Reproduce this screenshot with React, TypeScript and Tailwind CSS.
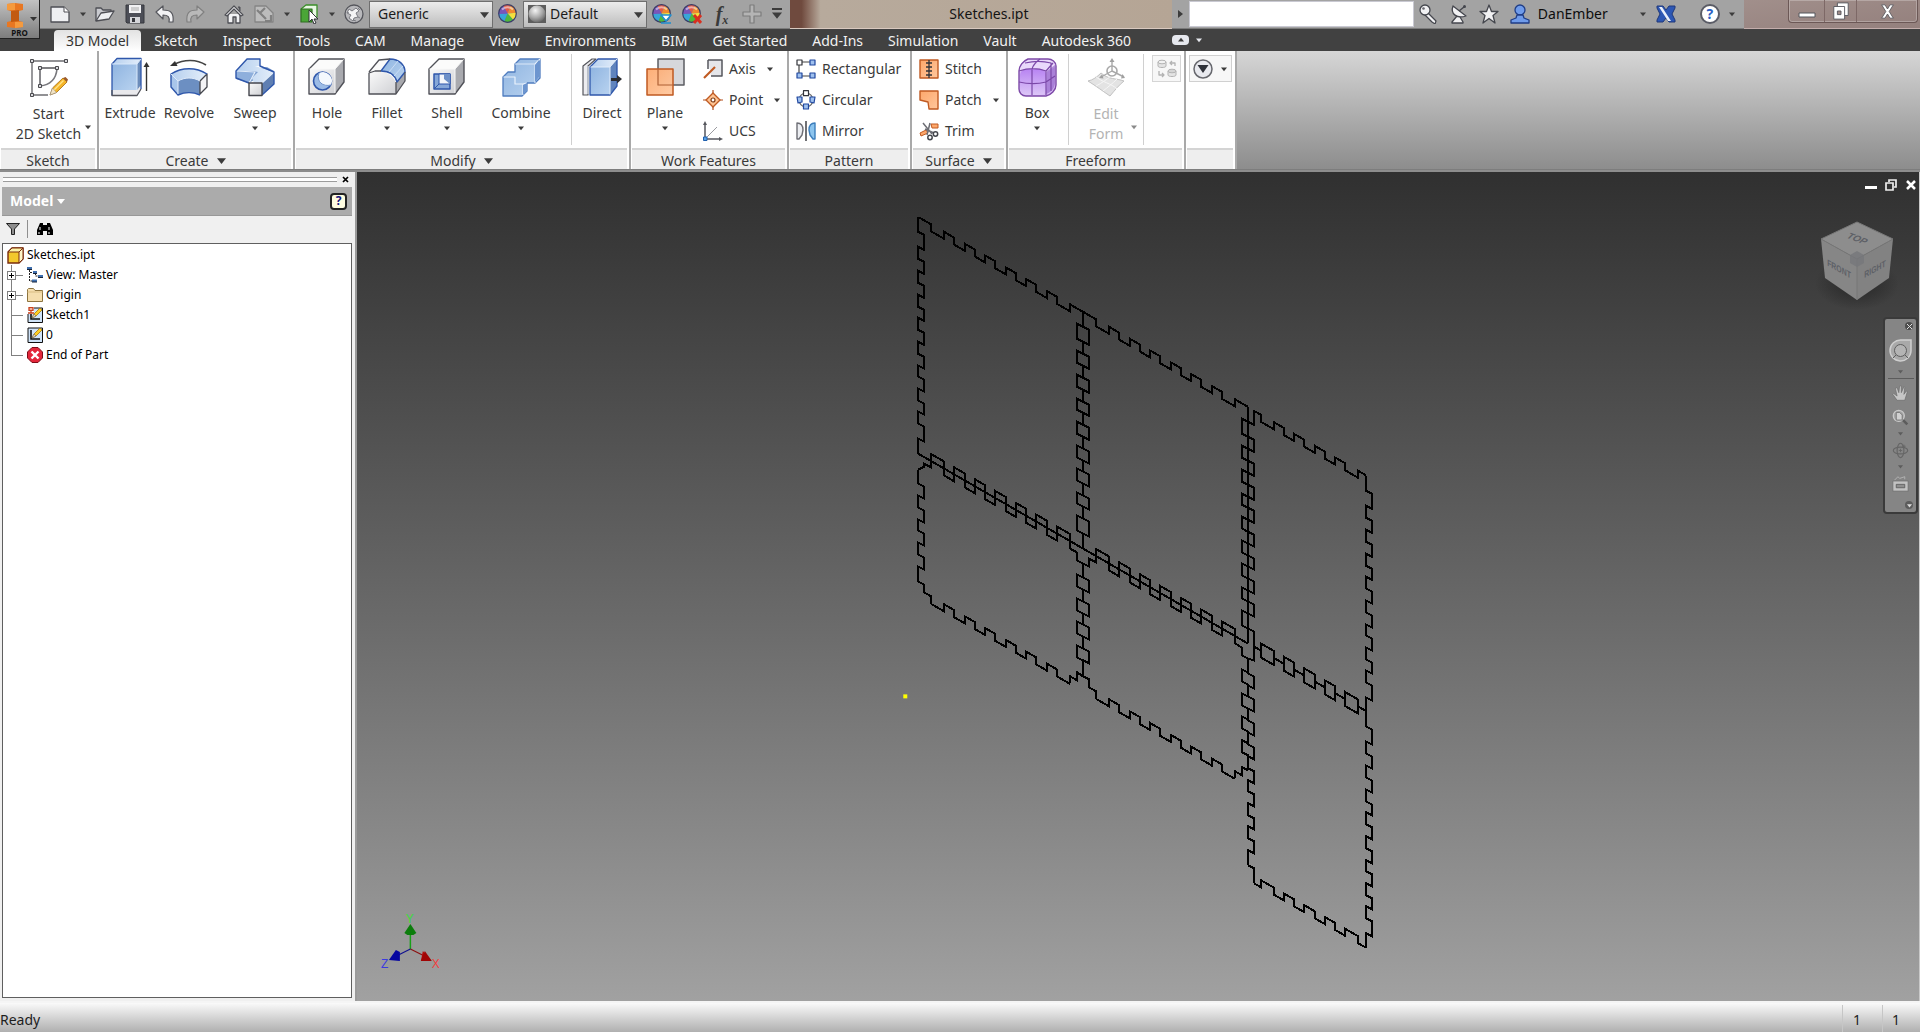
import type { ReactNode } from 'react';

/* ---------- small shared bits ---------- */

function Caret({ className = 'text-[#3c3c3c]', size = 6 }: { className?: string; size?: number }) {
  return (
    <svg width={size} height={size} viewBox="0 0 8 8" className={className} aria-hidden="true">
      <path d="M0 2h8L4 7z" fill="currentColor" />
    </svg>
  );
}

function Gradients() {
  return (
    <svg width="0" height="0" className="absolute" aria-hidden="true">
      <defs>
        <linearGradient id="blueFace" x1="0" y1="0" x2="1" y2="1">
          <stop offset="0" stopColor="#8fb4e0" />
          <stop offset="1" stopColor="#b9d3f0" />
        </linearGradient>
        <linearGradient id="blueTop" x1="0" y1="0" x2="1" y2="0">
          <stop offset="0" stopColor="#b5cfee" />
          <stop offset="1" stopColor="#e4eefa" />
        </linearGradient>
        <linearGradient id="greyFace" x1="0" y1="0" x2="1" y2="1">
          <stop offset="0" stopColor="#fafafa" />
          <stop offset="1" stopColor="#cfd0d4" />
        </linearGradient>
        <linearGradient id="orangeFace" x1="0" y1="0" x2="1" y2="1">
          <stop offset="0" stopColor="#fda76b" />
          <stop offset="1" stopColor="#ffc79d" />
        </linearGradient>
        <linearGradient id="purpleFace" x1="0" y1="0" x2="0" y2="1">
          <stop offset="0" stopColor="#b884f2" />
          <stop offset="1" stopColor="#dcc6f7" />
        </linearGradient>
        <radialGradient id="ball" cx="0.4" cy="0.3" r="0.7">
          <stop offset="0" stopColor="#f4f4f4" />
          <stop offset="0.6" stopColor="#a9a9a9" />
          <stop offset="1" stopColor="#6b6b6b" />
        </radialGradient>
      </defs>
    </svg>
  );
}

function Big({ children }: { children: ReactNode }) {
  return <svg width="40" height="40" viewBox="0 0 40 40" fill="none" strokeLinejoin="round" aria-hidden="true">{children}</svg>;
}

function Small({ children }: { children: ReactNode }) {
  return <svg width="20" height="20" viewBox="0 0 20 20" fill="none" strokeLinejoin="round" className="shrink-0" aria-hidden="true">{children}</svg>;
}

/* ---------- ribbon icons, large ---------- */

const SketchIcon = () => (
  <Big>
    <path d="M3 4H37M3 4V38H19" stroke="#6e6e72" strokeWidth="1.4" />
    <path d="M11 11H28M11 11V29" stroke="#55555a" strokeWidth="1.4" />
    <path d="M28 12C27 22 21 28 11 29" stroke="#77777c" strokeWidth="1.6" />
    {[[3, 4], [37, 4], [3, 38], [11, 11], [28, 11], [11, 29]].map(([x, y]) => (
      <rect key={`${x}-${y}`} x={x - 1.5} y={y - 1.5} width="3" height="3" fill="#d9d9dc" stroke="#4a4a4f" />
    ))}
    <path d="M21 38l2.500-7L34 21l4 4-10.500 10.500z" fill="#f5b527" stroke="#a36a10" strokeWidth="0.800" />
    <path d="M25 33l9.500-9.500" stroke="#ffe38a" strokeWidth="1.500" />
    <path d="M34 21l4 4 1-2.500-2.500-2.500z" fill="#9c5a2c" />
    <path d="M21 38l2.500-7 4 4.500z" fill="#f2e3c4" stroke="#888" strokeWidth="0.500" />
  </Big>
);

const ExtrudeIcon = () => (
  <Big>
    <path d="M2 7l5-5h24l-4 5z" fill="url(#blueTop)" />
    <path d="M27 7l4-5v30l-4 7z" fill="#6b8cba" />
    <path d="M2 7h25v26H2z" fill="url(#blueFace)" />
    <path d="M2 33h25l4-5v4l-4 7H2z" fill="#e9e9ec" />
    <path d="M2 38.500V7l5-5.500h24V32" stroke="#2f57ab" strokeWidth="1.300" />
    <path d="M2 7h25v26M27 7l4-5" stroke="#d9e8fa" />
    <path d="M2 33v5.500h25l4-6.500" stroke="#55565c" strokeWidth="1.300" />
    <path d="M36.500 34V8" stroke="#333" strokeWidth="1.400" />
    <path d="M33.500 10l3-5 3 5z" fill="#333" />
  </Big>
);

const RevolveIcon = () => (
  <Big>
    <path d="M2 17C13 10 27 10 38 17l-7 7c-7-4-15-4-22 0z" fill="url(#blueTop)" />
    <path d="M9 24c7-4 15-4 22 0v14c-7-3-15-3-22 0z" fill="#6c8fc2" />
    <path d="M2 17l7 7v14l-7-8z" fill="#a9c6ea" />
    <path d="M31 24l7-7v13l-7 7z" fill="#f3f3f5" stroke="#44464d" strokeWidth="1.300" />
    <path d="M31 38c-7-3-15-3-22 0l-7-8V17C13 10 27 10 38 17" stroke="#2f57ab" strokeWidth="1.400" />
    <path d="M2 17l7 7c7-4 15-4 22 0M9 24v13" stroke="#dfeafa" />
    <path d="M5 7.500C15 2 28 2 37 8" stroke="#444" strokeWidth="1.600" />
    <path d="M1 9l5-5 2.500 5z" fill="#333" />
  </Big>
);

const SweepIcon = () => (
  <Big>
    <path d="M1 14v8l13 4 5-3 8 3 12-12-7-4z" fill="#7d9fd0" />
    <path d="M1 14L12 2h13v7h-5l19 6-12 11h-8l-2-5 6-6-5-1z" fill="url(#blueTop)" />
    <path d="M27 26l12-11v12L27 38z" fill="#5f7fb2" />
    <path d="M1 14l19 1-6 8v3L1 21z" fill="#8eafdc" />
    <path d="M1 14l19 1-6 11h13l12-11" stroke="#e2edfa" strokeWidth="1.200" />
    <path d="M14 26L1 21v-7L12 2h13v7l14 6v12L27 38" stroke="#2f57ab" strokeWidth="1.400" />
    <path d="M14 26h13v12.500H14z" fill="url(#greyFace)" stroke="#44464d" strokeWidth="1.400" />
  </Big>
);

const GreyCube = ({ children }: { children?: ReactNode }) => (
  <Big>
    <path d="M2 12L12 2h25l-9 10z" fill="#fbfbfb" />
    <path d="M28 12l9-10v23L28 37z" fill="#a9aaaf" />
    <path d="M2 12h26v25H2z" fill="url(#greyFace)" />
    <path d="M2 12L12 2h25v23L28 37H2z" stroke="#505158" strokeWidth="1.400" />
    <path d="M2.500 12H28v24M28 12l8.500-9.500" stroke="#f8f8f8" />
    {children}
  </Big>
);

const HoleIcon = () => (
  <GreyCube>
    <circle cx="15.500" cy="24" r="9" fill="#9bbbe6" stroke="#2f57ab" strokeWidth="1.600" />
    <path d="M12 16a9 9 0 0 0 12 12 9 9 0 0 0-12-12z" fill="#f4f8fd" />
    <path d="M12 16c-3 9 4 14 12 12" stroke="#6e92cc" />
  </GreyCube>
);

const FilletIcon = () => (
  <Big>
    <path d="M2 15L12 3h10L14 15z" fill="#fafafa" />
    <path d="M2 15h12c8 0 14 6 15 12v10H2z" fill="url(#greyFace)" />
    <path d="M29 24l9-9v9l-9 13z" fill="#a7a8ad" />
    <path d="M14 14L23 2c9 0 15 6 15 13l-8 10c-2-7-8-11-16-11z" fill="url(#blueFace)" stroke="#2f57ab" strokeWidth="1.400" />
    <path d="M22 15l9-11M27 19l9-10" stroke="#c9ddf5" />
    <path d="M14 14H8l-6 2v21h27l9-13v-9M29 25v12M2 15L12 3l11-1" stroke="#505158" strokeWidth="1.300" />
  </Big>
);

const ShellIcon = () => (
  <GreyCube>
    <path d="M7 17h16v15H7z" fill="#86a7d8" stroke="#2f57ab" strokeWidth="1.500" />
    <path d="M12 17h11v10H12z" fill="#f3f6fb" stroke="#2f57ab" />
    <path d="M17 17h6v10l-6-5z" fill="#6d90c8" />
    <path d="M7 32l5-5" stroke="#2f57ab" />
  </GreyCube>
);

const CombineIcon = () => (
  <Big>
    <path d="M2 20l5-5h7V7l5-5h20v19l-5 5h-8v8l-5 5H2z" fill="url(#blueFace)" stroke="#4f7cbf" strokeWidth="1.300" />
    <path d="M14 7h20v19" stroke="#dbe8f8" strokeWidth="1.200" />
    <path d="M2.500 20H14v7h8v11M34 7l5-5M22 27l4-1" stroke="#eaf2fc" strokeWidth="1.200" />
    <path d="M34 8l4-5v17l-4 5z" fill="#6c95cf" />
    <path d="M22 28l4-2v8l-4 4z" fill="#6c95cf" />
  </Big>
);

const DirectIcon = () => (
  <Big>
    <path d="M1 9L10 2h4L6 9v29H1z" fill="#ececef" stroke="#55565c" strokeWidth="1.200" />
    <path d="M8 10l8-8h19l-7 8z" fill="url(#blueTop)" />
    <path d="M28 10l7-8v27l-7 9z" fill="#6084bd" />
    <path d="M8 10h20v28H8z" fill="url(#blueFace)" />
    <path d="M8 10l8-8h19v27l-7 9H8z" stroke="#2f57ab" strokeWidth="1.300" />
    <path d="M8.500 10H28v27.500M28 10l7-8M6 9v28" stroke="#e2edfa" />
    <path d="M29 21h6v-3l5 4-5 4.500V24h-6z" fill="#2c2d31" />
  </Big>
);

const PlaneIcon = () => (
  <Big>
    <path d="M13 2h26v26H13z" fill="#d6d7db" stroke="#5c5d63" strokeWidth="1.500" />
    <path d="M2 12h26v26H2z" fill="url(#orangeFace)" stroke="#c05a22" strokeWidth="1.500" fillOpacity="0.920" />
    <path d="M13 12v16h15" stroke="#b5673a" strokeWidth="1.200" />
  </Big>
);

const BoxIcon = () => (
  <Big>
    <path d="M2 14c0-5 4-10 9-12h20c4 0 8 3 8 7v19c0 5-5 10-10 11H9c-4 0-7-3-7-7z" fill="#d7baf5" />
    <path d="M2 13c0-6 4-9 9-11h20c4 0 7 4 7 8l-8 5c-8-2-20-2-28 0z" fill="#e9d8fb" />
    <rect x="3" y="12" width="26" height="26" rx="6" fill="url(#purpleFace)" />
    <path d="M30 14l8-6v18c0 5-4 9-9 11z" fill="#8c5cc4" fillOpacity="0.600" />
    <path d="M2 14c9-3 19-3 27 0v24M2 25c9 2 19 2 27 0l9-6M15 38V12c1-4 4-7 8-10M8 6c9-2 18-2 26 0v28M29 14l7-8" stroke="#7b48a8" strokeWidth="1.200" />
    <path d="M2 14c0-5 4-10 9-12h20c4 0 8 3 8 7v19c0 5-5 10-10 11H9c-4 0-7-3-7-7z" stroke="#7d4aa8" strokeWidth="1.400" />
  </Big>
);

const EditFormIcon = () => (
  <Big>
    <path d="M2 24c5-1 9-4 13-8 8 7 15 5 23 8-5 4-9 9-14 15-6-4-14-10-22-15z" fill="#e3e3e3" stroke="#c2c2c2" />
    <path d="M9 19c8 7 16 7 22 13M10 29c6-3 11-7 15-10M17 34c5-4 9-7 14-12" stroke="#f6f6f6" />
    <circle cx="26" cy="14" r="5" stroke="#a9a9a9" strokeWidth="1.600" />
    <path d="M26 14V3M26 14l12 6M26 14l-11 6" stroke="#a9a9a9" strokeWidth="1.400" />
    <path d="M23.500 5L26 1l2.500 4zM35 21.500l4-.5-2.500-4zM13 21l4.500.500-1.500-4z" fill="#a0a0a0" />
  </Big>
);

/* ---------- ribbon icons, small ---------- */

const AxisIcon = () => (
  <Small>
    <path d="M5 1h14v16H8M5 1v9" fill="#e5e6ea" stroke="#56575d" strokeWidth="1.500" />
    <path d="M1 19L12 8" stroke="#c05a22" strokeWidth="2.200" />
  </Small>
);
const PointIcon = () => (
  <Small>
    <path d="M10 0v20M0 10h20" stroke="#b04f1e" strokeWidth="1.200" />
    <path d="M10 3l7 7-7 7-7-7z" fill="#ffc493" stroke="#c05a22" strokeWidth="1.400" />
    <circle cx="10" cy="10" r="2" fill="#fff" stroke="#7d3a16" strokeWidth="1.200" />
  </Small>
);
const UcsIcon = () => (
  <Small>
    <path d="M2 16V2M4 18h14" stroke="#56575d" strokeWidth="1.500" />
    <path d="M3 17L14 6" stroke="#9a9ba0" />
    <path d="M0 4l2-4 2 4zM16 16l4 2-4 2z" fill="#56575d" />
    <rect x="0.500" y="16" width="3.500" height="3.500" fill="#5aa4e8" stroke="#1f5fae" />
  </Small>
);
const RectangularIcon = () => (
  <Small>
    <path d="M6 3h8M3 6v8M6 17h8" stroke="#444" strokeWidth="1.200" />
    <rect x="1" y="1" width="5" height="5" fill="#fff" stroke="#33343a" strokeWidth="1.200" />
    <rect x="14" y="1" width="5" height="5" fill="#9fc0ee" stroke="#2148a0" strokeWidth="1.200" />
    <rect x="1" y="14" width="5" height="5" fill="#9fc0ee" stroke="#2148a0" strokeWidth="1.200" />
    <rect x="14" y="14" width="5" height="5" fill="#9fc0ee" stroke="#2148a0" strokeWidth="1.200" />
  </Small>
);
const CircularIcon = () => (
  <Small>
    <circle cx="10" cy="10" r="7" stroke="#666" strokeWidth="1.200" />
    <rect x="7.500" y="0.700" width="5" height="5" fill="#fff" stroke="#33343a" strokeWidth="1.200" />
    <rect x="7.500" y="14" width="5" height="5" fill="#9fc0ee" stroke="#2148a0" strokeWidth="1.200" />
    <path d="M1 7h5v5l-4 1zM19 7h-5v5l4 1z" fill="#9fc0ee" stroke="#2148a0" strokeWidth="1.200" />
  </Small>
);
const MirrorIcon = () => (
  <Small>
    <path d="M1 2c4 0 6 3 6 7l-1 5-3 4-2 0z" fill="#eceef2" stroke="#6d6e75" strokeWidth="1.400" />
    <path d="M19 2c-4 0-6 3-6 7l1 5 3 4 2 0z" fill="#8cc4ee" stroke="#3c7ebc" strokeWidth="1.400" />
    <path d="M10 0v20" stroke="#33343a" strokeWidth="1.400" />
  </Small>
);
const StitchIcon = () => (
  <Small>
    <path d="M1 1h18v18H1z" fill="url(#orangeFace)" stroke="#c05a22" strokeWidth="1.400" />
    <path d="M10 1v18M7 4h6M7 8h6M7 12h6M7 16h6" stroke="#33343a" strokeWidth="1.300" />
  </Small>
);
const PatchIcon = () => (
  <Small>
    <path d="M1 1h18v18h-9l-1-7-8-2z" fill="url(#orangeFace)" stroke="#c05a22" strokeWidth="1.400" />
  </Small>
);
const TrimIcon = () => (
  <Small>
    <path d="M12 3h7v4h-6zM1 12l6-3 2 3-7 3z" fill="#fda76b" stroke="#c05a22" />
    <path d="M4 2l9 11M11 2L8 14M6 8l9 4" stroke="#6d6e75" strokeWidth="1.500" />
    <circle cx="11" cy="16.500" r="2.200" stroke="#44464d" strokeWidth="1.500" />
    <circle cx="16.500" cy="13" r="2.200" stroke="#44464d" strokeWidth="1.500" />
  </Small>
);

/* ---------- title bar ---------- */

function QuickButton({ label, wide = true, children }: { label: string; wide?: boolean; children: ReactNode }) {
  return (
    <button aria-label={label} className={`flex h-full shrink-0 items-center justify-center ${wide ? 'w-[30px]' : 'w-[15px]'}`}>
      {children}
    </button>
  );
}

const ColorBall = ({ mark }: { mark?: 'down' | 'clear' }) => (
  <Small>
    <circle cx="9.500" cy="9.500" r="9" fill="#4a6fd0" />
    <path d="M9.500 9.500L5 1.700A9 9 0 0 1 13 1.200z" fill="#e05a4a" />
    <path d="M9.500 9.500L13 1.200a9 9 0 0 1 5.500 7.500z" fill="#f08a2c" />
    <path d="M9.500 9.500l9-.8a9 9 0 0 1-3.500 7z" fill="#f4e03c" />
    <path d="M9.500 9.500l5.500 6.200a9 9 0 0 1-9 2z" fill="#4fb83c" />
    <path d="M9.500 9.500L6 17.700A9 9 0 0 1 .6 10z" fill="#37a6d8" />
    <path d="M9.500 9.500L.6 10A9 9 0 0 1 5 1.700z" fill="#7a55b8" />
    <circle cx="9.500" cy="9.500" r="8.800" stroke="#3c3f66" strokeWidth="1.200" />
    <path d="M4 5.500C7 2.500 12 2.500 15 5.500" stroke="#fff" strokeOpacity="0.500" strokeWidth="2" />
    {mark === 'down' && <path d="M9 11h10l-5 6zM9 19h10" fill="#fff" stroke="#1f8fd0" strokeWidth="1.600" />}
    {mark === 'clear' && <path d="M12 11l7 8M19 11l-7 8" stroke="#d8301f" strokeWidth="3" />}
  </Small>
);

function Combo({ label, value, options, thumb }: { label: string; value: string; options: string[]; thumb?: boolean }) {
  return (
    <div className="relative flex h-[27px] w-[124px] shrink-0 items-center border border-[#6f6f6f] bg-linear-to-b from-[#ececec] to-[#bdbdbd]">
      {thumb && (
        <svg width="18" height="18" viewBox="0 0 18 18" className="ml-1 shrink-0" aria-hidden="true">
          <rect width="18" height="18" fill="#5d5d5d" />
          <circle cx="9" cy="9" r="8.500" fill="url(#ball)" />
        </svg>
      )}
      <select aria-label={label} defaultValue={value} className={`h-full min-w-0 flex-1 appearance-none bg-transparent text-sm text-[#1b1b1b] outline-none ${thumb ? 'pl-1' : 'pl-2'}`}>
        {options.map((o) => <option key={o}>{o}</option>)}
      </select>
      <span className="pointer-events-none absolute right-[3px]"><Caret size={9} /></span>
    </div>
  );
}

function QuickAccess() {
  return (
    <div className="flex w-[790px] shrink-0 items-center border-b border-[#7b7b7b] bg-[#a3a3a3] pl-[45px]">
      <QuickButton label="New">
        <Small><path d="M1 3h13l5 5v10H1z" fill="#eeeff2" stroke="#4e4f55" strokeWidth="1.300" /><path d="M14 3v5h5" fill="#fff" stroke="#4e4f55" /></Small>
      </QuickButton>
      <QuickButton label="New options" wide={false}><Caret /></QuickButton>
      <QuickButton label="Open">
        <Small><path d="M1 17V4h5l2 2h8v3" fill="#c9cacf" stroke="#4e4f55" strokeWidth="1.300" /><path d="M1 17L6 9l13-2-5 8z" fill="#eeeff2" stroke="#4e4f55" strokeWidth="1.300" /></Small>
      </QuickButton>
      <QuickButton label="Save">
        <Small><path d="M1 1h18v18H2l-1-1z" fill="#4c4e57" stroke="#37383e" /><path d="M4 1h12v8H4z" fill="#f1f1f3" /><path d="M5 13h10v6H5z" fill="#d5d6da" /><path d="M7 14h3v4H7z" fill="#37383e" /><path d="M6 4h8M6 6h8" stroke="#aaa" /></Small>
      </QuickButton>
      <QuickButton label="Undo">
        <Small><path d="M1 8l7-6v4c8 0 11 3 10 12h-4c1-5-1-7-6-7v4z" fill="#f2f2f4" stroke="#55565c" strokeWidth="1.200" /></Small>
      </QuickButton>
      <QuickButton label="Redo">
        <Small><path d="M19 8l-7-6v4C4 6 1 9 2 18h4c-1-5 1-7 6-7v4z" fill="#b9b9b9" stroke="#808080" strokeWidth="1.200" /></Small>
      </QuickButton>
      <span className="w-[9px] shrink-0" />
      <QuickButton label="Home view">
        <Small><path d="M4 10v9h5v-6h3v6h4v-9" fill="#f2f2f4" stroke="#4e4f55" strokeWidth="1.300" /><path d="M14 3h2v4" fill="#55565c" stroke="#4e4f55" /><path d="M1 11l9-9 9 9-2 1-7-7-7 7z" fill="#f7f7f8" stroke="#4e4f55" strokeWidth="1.200" /></Small>
      </QuickButton>
      <QuickButton label="Update">
        <Small><path d="M1 2h11l7 7v9H1z" fill="#bcbcbc" stroke="#858585" strokeWidth="1.300" /><path d="M3 6l9 9M11 4L6 9m5 8h6v-6" stroke="#808080" strokeWidth="2.200" /></Small>
      </QuickButton>
      <QuickButton label="Update options" wide={false}><Caret /></QuickButton>
      <QuickButton label="Selection filter">
        <Small><path d="M2 5l5-4h11v12l-4 4" fill="#e9f7e4" stroke="#3b8f2a" strokeWidth="1.300" /><path d="M2 5h11v13H2z" fill="#4aa637" stroke="#2e6f20" strokeWidth="1.200" /><path d="M10 6v12l3-3 2 5 2-1-2-4h4z" fill="#fff" stroke="#33343a" /></Small>
      </QuickButton>
      <QuickButton label="Filter options" wide={false}><Caret /></QuickButton>
      <QuickButton label="Material">
        <Small><circle cx="10" cy="10" r="9" fill="#b9b9bc" stroke="#55565c" strokeWidth="1.300" /><path d="M5 5l3 2 4-3 3 3-3 2 2 4-4 1-1 3-4-3 2-3-4-2zM14 13l2 1M9 16l3 1M3 8l2 1M14 4l2 2" stroke="#7b7c82" fill="#f4f4f5" /></Small>
      </QuickButton>
      <Combo label="Material" value="Generic" options={['Generic', 'Steel', 'Aluminum']} />
      <QuickButton label="Appearance"><ColorBall /></QuickButton>
      <Combo label="Appearance" value="Default" options={['Default', 'Smooth']} thumb />
      <QuickButton label="Adjust"><ColorBall mark="down" /></QuickButton>
      <QuickButton label="Clear overrides"><ColorBall mark="clear" /></QuickButton>
      <QuickButton label="Parameters">
        <span className="font-['Liberation_Serif'] text-xl leading-none font-bold text-[#3a3a3a] italic">f<sub className="text-xs">x</sub></span>
      </QuickButton>
      <QuickButton label="Measure">
        <Small><path d="M8 1h4v7h7v4h-7v7H8v-7H1V8h7z" fill="#b4b4b4" stroke="#7c7c7c" strokeWidth="1.200" /></Small>
      </QuickButton>
      <button aria-label="Customize toolbar" className="flex w-[20px] flex-col items-center">
        <span className="h-[2px] w-[10px] bg-[#3c3c3c]" />
        <Caret size={10} />
      </button>
    </div>
  );
}

function InfoCenter() {
  return (
    <div className="flex w-[572px] shrink-0 items-center border-b border-[#7b7b7b] bg-[#a3a3a3]">
      <button aria-label="Collapse search" className="flex w-[17px] justify-center">
        <span className="-rotate-90"><Caret size={8} /></span>
      </button>
      <input aria-label="Search" className="h-[26px] w-[225px] border border-[#c9c9d2] bg-white px-1 text-sm outline-none" />
      <QuickButton label="Search">
        <Small><path d="M9 9l8 8-1 3-3-2-8-8z" fill="#f1f1f3" stroke="#44464d" strokeWidth="1.200" /><circle cx="6" cy="6" r="5" fill="#f1f1f3" stroke="#44464d" strokeWidth="1.300" /><circle cx="4.500" cy="4.500" r="1.300" fill="#66676d" /></Small>
      </QuickButton>
      <QuickButton label="Communication center">
        <Small><path d="M8 12l-5 6v1h11v-1l-3-5" fill="#f1f1f3" stroke="#44464d" strokeWidth="1.300" /><path d="M4 2c-3 8 4 13 13 10z" fill="#f1f1f3" stroke="#44464d" strokeWidth="1.300" /><path d="M10 7l5-4" stroke="#44464d" strokeWidth="1.500" /><circle cx="15.500" cy="2.500" r="1.500" fill="#44464d" /></Small>
      </QuickButton>
      <QuickButton label="Favorites">
        <Small><path d="M10 1l2.500 6.500H19l-5 4 2 7.500-6-4.500L4 19l2-7.500-5-4h6.500z" fill="#f1f1f3" stroke="#44464d" strokeWidth="1.300" /></Small>
      </QuickButton>
      <button className="flex w-[132px] items-center pl-[6px] text-sm text-[#0d0d0d]">
        <Small><circle cx="10" cy="6" r="5" fill="#6f9bea" stroke="#1f3d86" strokeWidth="1.300" /><path d="M7 11h6l1 3 5 2v3H1v-3l5-2z" fill="#6f9bea" stroke="#1f3d86" strokeWidth="1.300" /></Small>
        <span className="ml-2">DanEmber</span>
      </button>
      <QuickButton label="Account options" wide={false}><Caret /></QuickButton>
      <QuickButton label="Exchange apps">
        <Small><path d="M1 2h6l3 4 3-4h6v2l-3 6 3 6v2h-6l-3-4-3 4H1v-2l3-6-3-6z" fill="#2d57b4" stroke="#20397a" /><path d="M3 3h3l9 14h-3z" fill="#e9effb" /></Small>
      </QuickButton>
      <span className="w-[14px]" />
      <QuickButton label="Help">
        <span className="flex size-5 items-center justify-center rounded-full border-2 border-[#5a5c66] bg-white text-sm leading-none font-bold text-[#2a5fc4]">?</span>
      </QuickButton>
      <QuickButton label="Help options" wide={false}><Caret /></QuickButton>
    </div>
  );
}

function WindowButtons() {
  return (
    <div className="flex min-w-0 flex-[10] justify-end border-b border-[#c3adab] bg-linear-to-br from-[#a18f8b] to-[#94807d] pr-[2px]">
      <div className="flex h-[23px] rounded-b border border-t-0 border-[#6c5856] shadow-[inset_0_0_0_1px_rgba(255,255,255,0.25)]">
        <button aria-label="Minimize" className="flex w-9 items-center justify-center border-r border-[#7d6866]">
          <svg width="18" height="18" viewBox="0 0 18 18"><path d="M1 11h16v4H1z" fill="#fff" stroke="#55565c" /></svg>
        </button>
        <button aria-label="Restore" className="flex w-8 items-center justify-center border-r border-[#7d6866]">
          <svg width="18" height="18" viewBox="0 0 18 20"><path d="M5 1h12v14H5z" fill="#fff" stroke="#55565c" /><path d="M1 5h12v14H1z" fill="#fff" stroke="#55565c" /><path d="M5 10h4v4H5z" fill="#a08c89" stroke="#55565c" /></svg>
        </button>
        <button aria-label="Close" className="flex w-[60px] items-center justify-center">
          <svg width="15" height="15" viewBox="0 0 16 18"><path d="M1 1h4l3 5 3-5h4l-5 8 5 8h-4l-3-5-3 5H1l5-8z" fill="#fff" stroke="#55565c" /></svg>
        </button>
      </div>
    </div>
  );
}

/* ---------- menu tabs ---------- */

const tabs = ['3D Model', 'Sketch', 'Inspect', 'Tools', 'CAM', 'Manage', 'View', 'Environments', 'BIM', 'Get Started', 'Add-Ins', 'Simulation', 'Vault', 'Autodesk 360'];

function TabBar() {
  return (
    <nav className="flex h-[22px] items-end gap-px bg-[#414141] pl-[54px] text-sm leading-[21px] text-[#f2f2f2]">
      {tabs.map((t, i) => (
        <button key={t} className={i === 0 ? 'h-[21px] rounded-t-sm bg-linear-to-b from-[#e2e2e2] to-white px-3 text-[#333]' : 'h-[21px] px-3'}>
          {t}
        </button>
      ))}
      <button aria-label="Minimize ribbon" className="ml-[28px] flex h-[10px] w-[17px] items-center justify-center self-center rounded-sm bg-[#e6e8ee]">
        <span className="rotate-180"><Caret size={6} /></span>
      </button>
      <button aria-label="Ribbon options" className="ml-[6px] self-center"><Caret size={6} className="text-[#e6e8ee]" /></button>
    </nav>
  );
}

/* ---------- ribbon ---------- */

function Panel({ title, width, more, children }: { title: string; width: string; more?: boolean; children?: ReactNode }) {
  return (
    <section className={`flex shrink-0 flex-col border-r-2 border-[#a9a9a9] bg-white ${width}`}>
      <div className="flex h-[97px]">{children}</div>
      <div className="mr-[2px] ml-px flex flex-1 items-center justify-center gap-2 border-t-2 border-[#d4d4d4] bg-[#eeeeee] pt-[2px] text-sm leading-4">
        {title}
        {more && <Caret size={9} />}
      </div>
    </section>
  );
}

type BigButtonProps = { icon: ReactNode; label: string; width: string; menu?: boolean };

function BigButton({ icon, label, width, menu }: BigButtonProps) {
  return (
    <button className={`flex shrink-0 flex-col items-center pt-[6px] text-sm leading-5 ${width}`}>
      {icon}
      <span className="mt-[6px]">{label}</span>
      {menu && <span className="mt-[2px]"><Caret size={6} /></span>}
    </button>
  );
}

function TwoLineButton({ icon, lines, width, disabled }: { icon: ReactNode; lines: [string, string]; width: string; disabled?: boolean }) {
  return (
    <button disabled={disabled} className={`relative flex shrink-0 flex-col items-center pt-[6px] text-sm leading-5 ${width} ${disabled ? 'text-[#b3b3b3]' : ''}`}>
      {icon}
      <span className="mt-[7px]">{lines[0]}</span>
      <span>{lines[1]}</span>
      <span className="absolute right-[6px] bottom-[18px]"><Caret size={6} className={disabled ? 'text-[#8a8a8a]' : 'text-[#3c3c3c]'} /></span>
    </button>
  );
}

type Row = { icon: ReactNode; label: string; menu?: boolean };

function Rows({ rows }: { rows: Row[] }) {
  return (
    <div className="flex flex-col pt-[2px] pl-[7px]">
      {rows.map((r) => (
        <button key={r.label} className="flex h-[31px] items-center gap-[6px] text-sm">
          {r.icon}
          <span>{r.label}</span>
          {r.menu && <span className="ml-[5px]"><Caret size={6} /></span>}
        </button>
      ))}
    </div>
  );
}

const Rule = () => <span className="my-[3px] w-px shrink-0 bg-[#d0d0d0]" />;

function Ribbon() {
  return (
    <div className="flex h-[119px] border-b border-[#7d7d7d] bg-linear-to-b from-[#d6d6d6] to-[#8d8d8d] text-[#3a3a3a]">
      <Panel title="Sketch" width="w-[99px]">
        <TwoLineButton icon={<SketchIcon />} lines={['Start', '2D Sketch']} width="w-[97px]" />
      </Panel>
      <Panel title="Create" width="w-[196px]" more>
        <span className="w-[2px]" />
        <BigButton icon={<ExtrudeIcon />} label="Extrude" width="w-[58px]" />
        <BigButton icon={<RevolveIcon />} label="Revolve" width="w-[60px]" />
        <BigButton icon={<SweepIcon />} label="Sweep" width="w-[72px]" menu />
      </Panel>
      <Panel title="Modify" width="w-[336px]" more>
        <span className="w-[2px] shrink-0" />
        <BigButton icon={<HoleIcon />} label="Hole" width="w-[60px]" menu />
        <BigButton icon={<FilletIcon />} label="Fillet" width="w-[60px]" menu />
        <BigButton icon={<ShellIcon />} label="Shell" width="w-[60px]" menu />
        <BigButton icon={<CombineIcon />} label="Combine" width="w-[88px]" menu />
        <span className="w-[6px] shrink-0" />
        <Rule />
        <BigButton icon={<DirectIcon />} label="Direct" width="w-[60px]" />
      </Panel>
      <Panel title="Work Features" width="w-[158px]">
        <span className="w-[3px]" />
        <BigButton icon={<PlaneIcon />} label="Plane" width="w-[62px]" menu />
        <Rows rows={[
          { icon: <AxisIcon />, label: 'Axis', menu: true },
          { icon: <PointIcon />, label: 'Point', menu: true },
          { icon: <UcsIcon />, label: 'UCS' },
        ]} />
      </Panel>
      <Panel title="Pattern" width="w-[123px]">
        <Rows rows={[
          { icon: <RectangularIcon />, label: 'Rectangular' },
          { icon: <CircularIcon />, label: 'Circular' },
          { icon: <MirrorIcon />, label: 'Mirror' },
        ]} />
      </Panel>
      <Panel title="Surface" width="w-[96px]" more>
        <Rows rows={[
          { icon: <StitchIcon />, label: 'Stitch' },
          { icon: <PatchIcon />, label: 'Patch', menu: true },
          { icon: <TrimIcon />, label: 'Trim' },
        ]} />
      </Panel>
      <Panel title="Freeform" width="w-[178px]">
        <BigButton icon={<BoxIcon />} label="Box" width="w-[58px]" menu />
        <span className="w-[2px]" />
        <Rule />
        <TwoLineButton icon={<EditFormIcon />} lines={['Edit', 'Form']} width="w-[74px]" disabled />
        <Rule />
        <button aria-label="Convert" disabled className="mt-1 ml-2 flex h-[27px] w-[29px] items-center justify-center border border-[#d5d5d5] bg-[#f7f7f7]">
          <Small>
            <path d="M1 3v4c0 2 8 2 8 0V3M11 12v4c0 2 8 2 8 0v-4" fill="#e4e4e4" stroke="#b3b3b3" />
            <ellipse cx="5" cy="3" rx="4" ry="1.800" fill="#f2f2f2" stroke="#b3b3b3" />
            <ellipse cx="15" cy="12" rx="4" ry="1.800" fill="#d5d5d5" stroke="#b3b3b3" />
            <path d="M18 7V4h-5l2-2m-2 2l2 2M2 12v4h5l-2-2m2 2l-2 2" stroke="#b3b3b3" strokeWidth="1.300" />
          </Small>
        </button>
      </Panel>
      <Panel title="" width="w-[51px]">
        <button aria-label="Select other" className="mt-1 ml-[3px] flex h-[27px] w-[43px] items-center gap-2 border border-[#d0d0d0] bg-[#f7f7f7] pl-[3px]">
          <Small>
            <circle cx="10" cy="10" r="9" fill="#e8e9ee" stroke="#66676d" strokeWidth="1.500" />
            <path d="M4.500 6h11L10 14z" fill="#2d3038" />
          </Small>
          <Caret size={6} />
        </button>
      </Panel>
    </div>
  );
}

/* ---------- model browser ---------- */

const SketchNode = ({ shared }: { shared?: boolean }) => (
  <svg width="16" height="16" viewBox="0 0 16 16" fill="none" aria-hidden="true">
    <path d="M1 1h14.500v14.500H1z" fill="#cfe3f8" stroke="#111" />
    <path d="M4 3v9h9" stroke="#111" strokeWidth="1.600" />
    <path d="M5 11l2-4 6-6 2 2-6 6z" fill="#ffcf24" stroke="#9b6a00" strokeWidth="0.700" />
    <path d="M5 11l2-4 2 2z" fill="#f0dcc0" stroke="#555" strokeWidth="0.500" />
    {shared && <path d="M0 0h7v7H0z" fill="#fff" />}
    {shared && <path d="M2 .7h4v2.600H2zM1 6h6M4 3v3" fill="#ffd6c4" stroke="#c8401c" strokeWidth="1.300" />}
  </svg>
);

const nodes: { label: string; expandable?: boolean; icon: ReactNode }[] = [
  {
    label: 'View: Master',
    expandable: true,
    icon: (
      <svg width="16" height="16" viewBox="0 0 16 16" fill="none" aria-hidden="true">
        <path d="M2.500 3v11h3M3 5.500h3M8.500 6v3h2" stroke="#222" strokeDasharray="2 1" />
        <path d="M0 0h5v2.500H0zM6 4h4v2.500H6zM11 8h5v2.500h-5zM5 12.500h5V15H5z" fill="#3f6fae" />
        <path d="M0 2.500h5M6 6.500h4M11 10.500h5M5 15h5" stroke="#16243a" />
      </svg>
    ),
  },
  {
    label: 'Origin',
    expandable: true,
    icon: (
      <svg width="16" height="16" viewBox="0 0 16 16" aria-hidden="true">
        <path d="M.5 14.500v-12l1-1h5l1.500 2h7.500v11z" fill="#f5deae" stroke="#8d7440" />
        <path d="M.5 5h15" stroke="#d9bd83" />
      </svg>
    ),
  },
  { label: 'Sketch1', icon: <SketchNode shared /> },
  { label: '0', icon: <SketchNode /> },
  {
    label: 'End of Part',
    icon: (
      <svg width="16" height="16" viewBox="0 0 16 16" aria-hidden="true">
        <path d="M5 .5h6L15.500 5v6L11 15.500H5L.5 11V5z" fill="#e3263a" stroke="#7d0c18" />
        <path d="M4.500 4.500l7 7M11.500 4.500l-7 7" stroke="#fff" strokeWidth="2.400" />
      </svg>
    ),
  },
];

function ModelBrowser() {
  return (
    <aside className="flex w-[357px] shrink-0 flex-col border-r-2 border-[#9a9a9a] bg-[#f0f0f0] pr-[3px] pb-[3px] pl-[2px] text-xs text-black">
      <div className="flex h-[15px] items-center gap-[5px] pl-px">
        <span className="h-[5px] flex-1 border-y border-[#9c9c9c] bg-white" />
        <button aria-label="Close browser" className="mr-[3px]">
          <svg width="7" height="7" viewBox="0 0 7 7"><path d="M1 1l5 5M6 1L1 6" stroke="#000" strokeWidth="1.700" /></svg>
        </button>
      </div>
      <div className="flex h-[29px] items-center justify-between border-b border-[#989898] bg-[#ababab] pr-[5px] pl-2">
        <button className="flex items-center gap-1 text-sm font-bold text-white">
          Model <Caret size={8} className="text-white" />
        </button>
        <button aria-label="Help" className="flex h-[17px] w-[17px] items-center justify-center rounded-sm border-2 border-[#222] bg-[#fffde0] text-xs leading-none font-bold text-[#12127c]">?</button>
      </div>
      <div className="flex h-[27px] items-center pb-[2px] pl-[4px]">
        <button aria-label="Filter">
          <svg width="14" height="12" viewBox="0 0 14 12"><path d="M.5.500h13L8.500 6v5.500h-3V6z" fill="#8c8c8c" stroke="#222" /></svg>
        </button>
        <span className="mx-[7px] h-[18px] w-px bg-[#8f8f8f]" />
        <button aria-label="Find" className="ml-[2px]">
          <svg width="16" height="14" viewBox="0 0 16 14"><path d="M3 1h3v2h4V1h3l3 7v5h-6V9H6v4H0V8z" fill="#000" /><path d="M3 5v3M12 5v3M2 10v2M12 10v2" stroke="#fff" /></svg>
        </button>
      </div>
      <div className="flex-1 border border-[#5f5f5f] bg-white pt-[1px]">
        <div className="flex h-5 items-center gap-[3px] pl-[4px]">
          <svg width="17" height="17" viewBox="0 0 17 17" aria-hidden="true">
            <path d="M1 5l4-4h11v11l-4 4H1z" fill="#f3c82c" stroke="#7a2c0c" strokeWidth="1.400" />
            <path d="M1 5l4-4h11l-4 4z" fill="#fdf2a6" stroke="#7a2c0c" />
            <path d="M12 5l4-4v11l-4 4z" fill="#fff6c8" stroke="#7a2c0c" />
          </svg>
          Sketches.ipt
        </div>
        <ul>
          {nodes.map((n, i) => (
            <li key={n.label} className="flex h-5 items-center">
              <svg width="22" height="20" viewBox="0 0 22 20" className="mr-[2px] shrink-0" shapeRendering="crispEdges" fill="none" aria-hidden="true">
                <path d={i === nodes.length - 1 ? 'M8.500 0v10.500H20' : 'M8.500 0v20M8.500 10.500H20'} stroke="#808080" />
                {n.expandable && <path d="M4.500 6.500h8v8h-8z" fill="#fff" stroke="#808080" />}
                {n.expandable && <path d="M6 10.500h5M8.500 8v5" stroke="#000" />}
              </svg>
              {n.icon}
              <span className="ml-[3px]">{n.label}</span>
            </li>
          ))}
        </ul>
      </div>
    </aside>
  );
}

/* ---------- viewport ---------- */

const SLOPE = 0.576;

// finger joint spacing, measured along each kind of panel edge
const WIDE = [0, 13, 26, 36, 47, 57, 67, 77, 88, 98, 108, 118, 129, 139, 152, 165];
const NARROW = [0, 7, 20, 30, 40, 50, 61, 71, 81, 91, 104, 112];
const TALL = [0, 15, 30, 42, 54, 66, 78, 90, 101, 113, 125, 137, 149, 160, 172, 184, 195, 207, 222, 237];
const SHORT = [0, 14, 26, 38, 50, 61, 73, 85, 97, 112];
const TAIL = [0, 15, 27, 38, 50, 62, 74, 86, 98, 110, 122, 133, 145, 157, 168, 180, 192, 207];

function slanted(x0: number, y0: number, offset: number, steps: number[]) {
  let low = false;
  let d = '';
  steps.forEach((s, i) => {
    const x = x0 + s;
    const y = y0 + s * SLOPE;
    if (i === 0) {
      d = `M${x} ${y}`;
      return;
    }
    d += `L${x} ${y + (low ? offset : 0)}`;
    if (i < steps.length - 1) {
      low = !low;
      d += `V${y + (low ? offset : 0)}`;
    }
  });
  return d;
}

function upright(x0: number, x1: number, y0: number, steps: number[]) {
  const dy = (x1 - x0) / 2;
  let out = false;
  let d = `M${x0} ${y0}`;
  steps.slice(1).forEach((s, i) => {
    d += `V${y0 + s + (out ? dy : 0)}`;
    if (i < steps.length - 2) {
      out = !out;
      d += `L${out ? x1 : x0} ${y0 + s + (out ? dy : 0)}`;
    }
  });
  return d;
}

const inner = WIDE.slice(1, -1);

const edges = [
  // upper left
  slanted(918, 216, 7, WIDE),
  upright(918, 924, 216, TALL),
  upright(1083, 1077, 311, TALL),
  slanted(918, 453, -7, WIDE),
  // upper middle
  slanted(1083, 311, 7, WIDE),
  upright(1083, 1089, 311, TALL),
  upright(1248, 1242, 406, TALL),
  slanted(1083, 548, -7, WIDE),
  // upper right
  slanted(1254, 410, 7, NARROW),
  upright(1254, 1248, 409, TALL),
  upright(1366, 1372, 475, TALL),
  slanted(1254, 646, -7, NARROW),
  // lower left
  'M931 460V467L924 463V466L918 469',
  slanted(918, 460, -7, [13, ...inner]),
  'M1070 540V548L1077 552V560L1083 563L1089 566V558L1096 562V554',
  upright(918, 924, 469, SHORT),
  'M918 581L924 584V592L931 596V604',
  slanted(918, 596, -7, inner),
  'M1070 683V676L1077 680V672L1083 676',
  upright(1083, 1077, 563, SHORT),
  // lower middle
  slanted(1083, 555, -7, [13, ...inner]),
  'M1235 635V643L1242 647V655L1248 658L1254 660V646',
  upright(1083, 1089, 563, SHORT),
  'M1083 676L1089 679V687L1096 691V699',
  slanted(1083, 691, -7, inner),
  'M1235 778V771L1242 775V767L1248 770',
  upright(1248, 1242, 658, SHORT),
  // lower right
  slanted(1254, 646, 7, NARROW),
  upright(1248, 1254, 658, TAIL),
  'M1248 865L1254 868V883',
  upright(1366, 1372, 711, TALL),
  slanted(1254, 883, -7, NARROW),
];

function Triad() {
  return (
    <g strokeWidth="1.200" fontSize="12" fontFamily="Liberation Sans, sans-serif">
      <path d="M409.500 949v-20" stroke="#18a018" strokeWidth="1.500" />
      <path d="M409.500 949l12 6" stroke="#8c1010" />
      <path d="M409.500 949l-12 6" stroke="#101090" />
      <path d="M409.500 924l6 9-3 2h-6l-3-2z" fill="#0c7d0c" />
      <path d="M430 960l-8-9-2 10z" fill="#b50808" />
      <path d="M431 961l-11 0 4-10z" fill="#a00505" />
      <path d="M388 960l7-10 4 2v9z" fill="#0505a0" />
      <text x="405" y="923" fill="#3bdc3b">Y</text>
      <text x="431" y="968" fill="#f04040">X</text>
      <text x="380" y="968" fill="#3a3ae0">Z</text>
    </g>
  );
}

function ViewCube() {
  return (
    <svg width="84" height="96" viewBox="0 0 84 96" aria-label="View cube" className="absolute top-[44px] right-[20px]">
      <defs>
        <radialGradient id="cubeShadow">
          <stop offset="0" stopColor="#1c1c1c" stopOpacity="0.700" />
          <stop offset="1" stopColor="#1c1c1c" stopOpacity="0" />
        </radialGradient>
      </defs>
      <ellipse cx="42" cy="68" rx="42" ry="26" fill="url(#cubeShadow)" />
      <path d="M42 6l36 17-36 20L6 23z" fill="#8d8d8d" />
      <path d="M6 23l36 20v41L10 62z" fill="#868686" />
      <path d="M78 23L42 43v41l32-22z" fill="#828282" />
      <path d="M42 6l36 17-36 20L6 23zM42 43v41" fill="none" stroke="#777" />
      <path d="M42 35l7 4v8l-7 4-7-4v-8z" fill="#75777b" fillOpacity="0.800" />
      <g fontFamily="Liberation Sans, sans-serif" fontWeight="bold" fill="#5d6066" textAnchor="middle">
        <text transform="matrix(0.900 0.350 -0.700 0.700 40 25)" fontSize="10">TOP</text>
        <text transform="matrix(0.860 0.480 0 1.150 24 56)" fontSize="8">FRONT</text>
        <text transform="matrix(0.860 -0.480 0 1.150 60 56)" fontSize="8">RIGHT</text>
      </g>
    </svg>
  );
}

const navTools: { label: string; icon: ReactNode; menu?: boolean }[] = [
  {
    label: 'Pan',
    icon: <path d="M6 18L1 11l1-1 4 3L4 4l2-1 2 6 1-8h2v8l3-7 1 1-1 8 3-4 1 1-3 10z" fill="#c6c6c6" stroke="#6b6b6b" strokeWidth="0.800" />,
  },
  {
    label: 'Zoom', menu: true,
    icon: <><circle cx="8" cy="8" r="6.500" fill="#a5a5a5" stroke="#c9c9c9" strokeWidth="1.500" /><path d="M5 4h4l3 3v6H5z" fill="#d0d0d0" stroke="#6b6b6b" /><path d="M13 13l5 5" stroke="#5c5c5c" strokeWidth="3" /></>,
  },
  {
    label: 'Orbit', menu: true,
    icon: <><ellipse cx="10" cy="10" rx="4" ry="8.500" stroke="#656565" fill="none" strokeWidth="1.300" /><ellipse cx="10" cy="10" rx="8.500" ry="4" stroke="#656565" fill="none" strokeWidth="1.300" /><path d="M14 3v4M12 5h4M10 8v4M8 10h4" stroke="#656565" /></>,
  },
  {
    label: 'Look at',
    icon: <><path d="M1 7h18v12H1z" fill="#c2c2c2" stroke="#707070" /><path d="M5 11h10v4H5z" fill="#8e8e8e" stroke="#5c5c5c" /><path d="M3 6l4-4 2 2 6-2v3" stroke="#b8b8b8" fill="none" /></>,
  },
];

function NavBar() {
  return (
    <div className="absolute top-[145px] right-px flex w-[35px] flex-col items-center rounded border-2 border-[#3a3a3a] bg-[#858585] py-[3px]">
      <button aria-label="Close navigation bar" className="mr-[3px] flex size-[8px] items-center justify-center self-end rounded-full bg-[#4d4d4d]">
        <svg width="5" height="5" viewBox="0 0 5 5"><path d="M0 0l5 5M5 0L0 5" stroke="#ddd" /></svg>
      </button>
      <button aria-label="Steering wheel" className="mt-[9px]">
        <svg width="23" height="23" viewBox="0 0 23 23" fill="none">
          <path d="M12 1h10v11a10.500 10.500 0 1 1-10-11z" fill="#a9a9a9" stroke="#cfcfcf" strokeWidth="1.500" />
          <circle cx="11.500" cy="11.500" r="6" stroke="#5f5f5f" fill="#b4b4b4" />
          <path d="M7 16l-3 3M16 16l3 3" stroke="#5f5f5f" />
        </svg>
      </button>
      <span className="mt-[7px]"><Caret size={5} className="text-[#5c5c5c]" /></span>
      <span className="mt-[4px] mb-[2px] h-px w-[26px] bg-[#5c5c5c]" />
      {navTools.map((t) => (
        <div key={t.label} className="flex flex-col items-center">
          <button aria-label={t.label} className="flex h-6 items-center">
            <svg width="17" height="17" viewBox="0 0 20 20">{t.icon}</svg>
          </button>
          {t.menu && <span className="my-[2px]"><Caret size={5} className="text-[#5c5c5c]" /></span>}
        </div>
      ))}
      <button aria-label="Customize" className="mt-[6px] mr-[3px] flex size-[8px] items-center justify-center self-end rounded-full bg-[#5c5c5c]">
        <Caret size={5} className="text-[#ddd]" />
      </button>
    </div>
  );
}

function Viewport() {
  return (
    <main className="relative min-w-0 flex-1 border-r border-[#c9c9c9] bg-linear-to-b from-[#303030] to-[#a1a1a1]">
      <svg viewBox="357 171 1562 830" className="absolute inset-0 h-full w-full" aria-label="Sketch geometry">
        <path d={edges.join('')} fill="none" stroke="#000" strokeWidth="2" shapeRendering="crispEdges" />
        <rect x="903" y="694" width="4" height="4" fill="#ffff00" />
        <Triad />
      </svg>
      <div className="absolute top-[7px] right-[2px] flex gap-2">
        <button aria-label="Minimize document"><svg width="12" height="12" viewBox="0 0 12 12"><path d="M0 8.500h12" stroke="#fff" strokeWidth="3" /></svg></button>
        <button aria-label="Restore document"><svg width="12" height="12" viewBox="0 0 12 12" fill="none" stroke="#eee" strokeWidth="1.700"><path d="M1 4h7v7H1zM4 3V1h7v7H9" /></svg></button>
        <button aria-label="Close document"><svg width="12" height="12" viewBox="0 0 12 12"><path d="M2 2l8 8M10 2l-8 8" stroke="#fff" strokeWidth="2.500" /></svg></button>
      </div>
      <ViewCube />
      <NavBar />
    </main>
  );
}

/* ---------- page ---------- */

export default function App() {
  return (
    <div className="relative flex h-screen flex-col overflow-hidden bg-[#f0f0f0] font-['Noto_Sans',sans-serif]">
      <Gradients />
      <header className="flex h-[29px] shrink-0">
        <QuickAccess />
        <div className="flex min-w-0 flex-[21] items-center justify-center border-b border-[#d9c9bf] bg-linear-to-r from-[#6f4a3e] from-3% via-[#b7aa9c] via-8% to-[#b5a595] pl-[16px] text-sm text-[#141414]">
          Sketches.ipt
        </div>
        <InfoCenter />
        <WindowButtons />
      </header>
      <TabBar />
      <button aria-label="Application menu" className="absolute top-0 left-0 flex h-[39px] w-10 flex-col items-center border-r border-b border-[#222] bg-linear-to-b from-[#c2c2c2] to-[#7d7d7d]">
        <svg width="40" height="28" viewBox="0 0 40 28" aria-hidden="true">
          <path d="M7 4l8-1 8 1v6l-4 1v10l4 1v5l-8 1-8-1v-5l4-1V11l-4-1z" fill="#e87722" />
          <path d="M11 11l8-1v11l-8 1z" fill="#c25a10" />
          <path d="M7 4l8-1v7l-8 0zM15 22l8 0v5l-8 1z" fill="#f59a3e" />
          <path d="M30 17h7l-3.500 4z" fill="#333" />
        </svg>
        <span className="text-[8px] leading-[10px] font-bold text-[#111]">PRO</span>
      </button>
      <Ribbon />
      <div className="flex min-h-0 flex-1 border-t-2 border-[#8d8d8d]">
        <ModelBrowser />
        <Viewport />
      </div>
      <footer className="flex h-[31px] shrink-0 border-t-2 border-[#f5f5f5] bg-linear-to-b from-[#fafafa] to-[#b0b0b0] text-sm leading-5 text-[#1e1e1e]">
        <span className="flex-1 pt-[7px]">Ready</span>
        <span className="mt-[2px] w-10 border-l border-[#c6c6c6] pt-[5px] pl-[10px]">1</span>
        <span className="mt-[2px] w-[38px] border-l border-[#c6c6c6] pt-[5px] pl-[9px]">1</span>
      </footer>
    </div>
  );
}
